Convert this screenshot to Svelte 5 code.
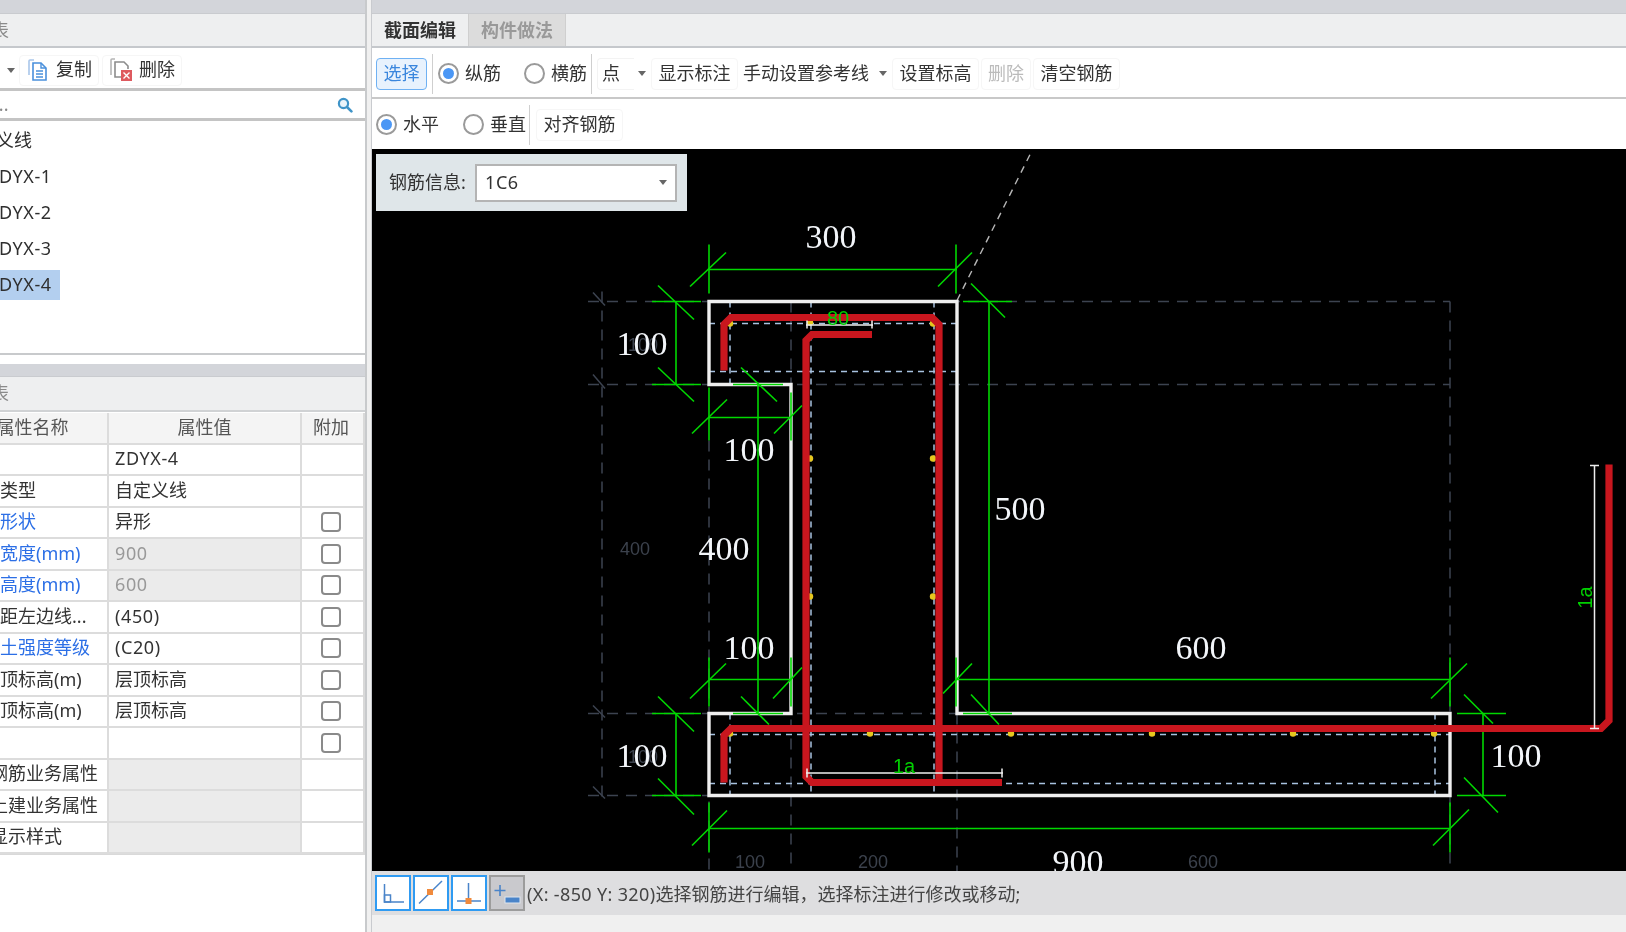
<script>
  const treeRows = [
    { label: '自定义线', root: true },
    { label: 'ZDYX-1' },
    { label: 'ZDYX-2' },
    { label: 'ZDYX-3' },
    { label: 'ZDYX-4', selected: true }
  ];

  const props = [
    { name: '名称', value: 'ZDYX-4', latin: true },
    { name: '截面类型', value: '自定义线' },
    { name: '截面形状', value: '异形', link: true, check: true },
    { name: '截面宽度(mm)', value: '900', link: true, check: true, off: true, latin: true },
    { name: '截面高度(mm)', value: '600', link: true, check: true, off: true, latin: true },
    { name: '轴线距左边线...', value: '(450)', check: true, latin: true },
    { name: '混凝土强度等级', value: '(C20)', link: true, check: true, latin: true },
    { name: '起点顶标高(m)', value: '层顶标高', check: true },
    { name: '终点顶标高(m)', value: '层顶标高', check: true },
    { name: '备注', value: '', check: true },
    { name: '钢筋业务属性', value: '', group: true },
    { name: '土建业务属性', value: '', group: true },
    { name: '显示样式', value: '', group: true }
  ];

  // Drawing coordinates are in page pixels; the SVG's viewBox starts at the canvas corner.
  const green = [
    // 300
    [709,269,957,269],[709,244,709,293],[956,244,956,293],[690,286,726,252],[938,286,972,252],
    // 100 upper left
    [676,301,676,384],[652,301,701,301],[652,384,701,384],[658,285,694,319],[658,367,694,401],
    // 100 under the notch
    [709,417,791,417],[709,387,709,440],[791,392,791,440],[692,433,727,399],[774,433,802,405],
    // 400
    [758,384,758,713],[733,384,783,384],[733,713,783,713],[741,367,777,401],[741,696,769,724],
    // 100 lower
    [709,679,791,679],[709,657,709,706],[791,657,791,706],[690,698,726,663],[773,698,802,667],
    // 500
    [989,301,989,713],[963,301,1012,301],[963,713,1012,713],[971,283,1005,317],[971,694,999,724],
    // 600
    [957,679,1450,679],[956,657,956,706],[1450,657,1450,706],[943,693,972,663],[1431,698,1467,663],
    // 100 lower left
    [676,713,676,795],[652,713,701,713],[652,795,701,795],[658,696,694,731],[658,778,694,814],
    // 100 right
    [1483,713,1483,795],[1457,713,1506,713],[1457,795,1506,795],[1464,694,1493,723],[1464,777,1498,812],
    // 900
    [709,828,1450,828],[709,802,709,852],[1450,802,1450,852],[692,845,727,810],[1433,845,1469,809]
  ];

  const grid = [
    [588,301,1450,301],[588,384,1450,384],[588,713,1450,713],[588,795,709,795],
    [602,291,602,800],[709,440,709,871],[791,301,791,871],[957,713,957,871],[1450,301,1450,871]
  ];
  const gridTicks = [
    [593,292,605,305],[593,374,605,388],[593,705,605,717],[593,786,605,798]
  ];
  const inner = [
    [709,323,957,323],[709,371,957,371],[730,301,730,384],[811,301,811,795],[934,301,934,795],
    [709,734,1450,734],[709,783,1450,783],[1435,713,1435,795],[730,713,730,795]
  ];
  const dots = [
    [730,323],[810,322],[933,323],[810,458],[933,458],[810,596],[933,596],
    [730,733],[870,733],[1011,733],[1152,733],[1293,733],[1434,733]
  ];
  const bigLabels = [
    ['300',831,247],['100',642,354],['100',749,460],['400',724,559],['500',1020,519],
    ['100',749,658],['600',1201,658],['100',642,766],['100',1516,766],['900',1078,872]
  ];
  const faintLabels = [
    ['100',643,350],['400',635,554],['100',643,762],['100',750,867],['200',873,867],['600',1203,867]
  ];
</script>

<div class="app">
  <div class="left">
    <div class="bar"></div>
    <div class="head"><span class="head-text">构件列表</span></div>
    <div class="tools">
      <span class="arrow lead"></span>
      <button class="tool copy">
        <svg width="20" height="22" viewBox="0 0 20 22">
          <path d="M6 1H2a1 1 0 0 0-1 1v14" fill="none" stroke="#a9c6ea" stroke-width="1.6"/>
          <path d="M5 4h8l5 5v12H5z" fill="#fff" stroke="#4a90dc" stroke-width="1.6"/>
          <path d="M13 4v5h5M8 12h7M8 15h7M8 18h7" fill="none" stroke="#4a90dc" stroke-width="1.4"/>
        </svg>
        <span>复制</span>
      </button>
      <button class="tool del">
        <svg width="22" height="24" viewBox="0 0 22 24">
          <path d="M5 1H2a1 1 0 0 0-1 1v15" fill="none" stroke="#b5b5b5" stroke-width="1.6"/>
          <path d="M11 19H5V4h9l4 4v3" fill="#fff" stroke="#8c8c8c" stroke-width="1.6"/>
          <rect x="11" y="12" width="11" height="11" fill="#de5a5f"/>
          <path d="M13.500 14.500l6 6M19.500 14.500l-6 6" stroke="#fff" stroke-width="1.4"/>
        </svg>
        <span>删除</span>
      </button>
    </div>
    <div class="search">
      <span class="placeholder">请输入名称...</span>
      <svg width="16" height="16" viewBox="0 0 16 16">
        <circle cx="6.500" cy="6.500" r="4.600" fill="#eaf4fa" stroke="#3f94c8" stroke-width="2.200"/>
        <path d="M10 10l4.400 4.400" stroke="#3f94c8" stroke-width="2.600" stroke-linecap="round"/>
      </svg>
    </div>
    <div class="tree">
      {#each treeRows as row}
        <div class="tree-row" class:root={row.root}>
          <span class:selected={row.selected}>{row.label}</span>
        </div>
      {/each}
    </div>
    <div class="bar lower"></div>
    <div class="head lower-head"><span class="head-text">属性列表</span></div>
    <div class="table-wrap">
      <div class="grid">
        <div class="cell hd col1">属性名称</div>
        <div class="cell hd mid">属性值</div>
        <div class="cell hd last">附加</div>
        {#each props as p}
          <div class="cell col1" class:link={p.link} class:group={p.group}>{p.name}</div>
          <div class="cell mid" class:off={p.off || p.group} class:latin={p.latin}>{p.value}</div>
          <div class="cell last">{#if p.check}<span class="box"></span>{/if}</div>
        {/each}
      </div>
    </div>
  </div>

  <div class="gutter"></div>

  <div class="right">
    <div class="bar"></div>
    <div class="tabs">
      <div class="tab active">截面编辑</div>
      <div class="tab">构件做法</div>
    </div>
    <div class="row row1">
      <button class="btn primary">选择</button>
      <span class="sep s1"></span>
      <span class="radio on r1"></span><span class="lbl">纵筋</span>
      <span class="radio r2"></span><span class="lbl">横筋</span>
      <span class="sep s2"></span>
      <span class="combo">点</span>
      <span class="arrow a1"></span>
      <button class="btn b1">显示标注</button>
      <span class="lbl l1">手动设置参考线</span>
      <span class="arrow a2"></span>
      <button class="btn b2">设置标高</button>
      <button class="btn dim">删除</button>
      <button class="btn b3">清空钢筋</button>
    </div>
    <div class="row row2">
      <span class="radio on r3"></span><span class="lbl">水平</span>
      <span class="radio r4"></span><span class="lbl">垂直</span>
      <span class="sep s3"></span>
      <button class="btn b4">对齐钢筋</button>
    </div>
    <div class="canvas">
      <svg class="drawing" width="1253" height="722" viewBox="372 148.500 1253 722">
        <rect x="372" y="148" width="1253" height="723" fill="#000"/>
        <line x1="957" y1="300" x2="1031" y2="152" stroke="#b8b8b8" stroke-width="1.4" stroke-dasharray="7 6"/>
        {#each grid as [x1, y1, x2, y2]}
          <line {x1} {y1} {x2} {y2} stroke="#3c4350" stroke-width="1.5" stroke-dasharray="11 8"/>
        {/each}
        {#each gridTicks as [x1, y1, x2, y2]}
          <line {x1} {y1} {x2} {y2} stroke="#3c4350" stroke-width="1.5"/>
        {/each}
        {#each faintLabels as [t, x, y]}
          <text class="faint" {x} {y}>{t}</text>
        {/each}
        {#each inner as [x1, y1, x2, y2]}
          <line {x1} {y1} {x2} {y2} stroke="#a8c2e0" stroke-width="1.5" stroke-dasharray="6 5"/>
        {/each}
        <path d="M709 301H957V713H1450V795H709V713H791V384H709Z" fill="none" stroke="#efefef" stroke-width="3.400"/>
        {#each dots as [cx, cy]}
          <circle {cx} {cy} r="3.200" fill="#e6c71e"/>
        {/each}
        {#each green as [x1, y1, x2, y2]}
          <line {x1} {y1} {x2} {y2} stroke="#00d800" stroke-width="1.600"/>
        {/each}
        <g fill="none" stroke="#c8161e" stroke-width="7.200">
          <path d="M724 370V324L731 317H932L939 324V782"/>
          <path d="M872 334H812L806 340V776L812 782H1002"/>
          <path d="M724 782V735L731 728H1601L1609 720V464"/>
        </g>
        <g fill="none" stroke="#eee" stroke-width="1.500">
          <path d="M806 324.500H873M807 320v8M872 320v8"/>
          <path d="M806 772.500H1003M807 768v9M1002 768v9"/>
          <path d="M1594.500 465V728M1590 465h9M1590 728h9"/>
        </g>
        {#each bigLabels as [t, x, y]}
          <text class="big" {x} {y}>{t}</text>
        {/each}
        <text class="note" x="838" y="324">80</text>
        <text class="note" x="904" y="772">1a</text>
        <text class="note" transform="translate(1592 597) rotate(-90)">1a</text>
      </svg>
      <div class="info">
        <span class="info-label">钢筋信息:</span>
        <div class="select"><span class="latin">1C6</span><span class="arrow a3"></span></div>
      </div>
    </div>
    <div class="status">
      <span class="sbtn">
        <svg width="32" height="32" viewBox="0 0 32 32" fill="none" stroke="#4a84c9" stroke-width="1.500">
          <path d="M7.500 7V25H27"/><rect x="7.500" y="18" width="6" height="7"/>
        </svg>
      </span>
      <span class="sbtn">
        <svg width="32" height="32" viewBox="0 0 32 32" fill="none">
          <path d="M4 26.500L27 4" stroke="#4a84c9" stroke-width="1.500"/>
          <rect x="12" y="12" width="6" height="6" fill="#f08a3c"/>
        </svg>
      </span>
      <span class="sbtn">
        <svg width="32" height="32" viewBox="0 0 32 32" fill="none">
          <path d="M15.500 6V24M4 24H28" stroke="#4a84c9" stroke-width="1.500"/>
          <rect x="12.500" y="21" width="6" height="6" fill="#f08a3c"/>
        </svg>
      </span>
      <span class="sbtn gray">
        <svg width="32" height="32" viewBox="0 0 32 32" fill="none">
          <path d="M9 8V19M3.500 13.500H14.500" stroke="#4a84c9" stroke-width="1.600"/>
          <rect x="14" y="20" width="15" height="6" fill="#4a84c9" stroke="#dfe6ee" stroke-width="1"/>
        </svg>
      </span>
      <span class="status-text"><span class="coords">(X: -850 Y: 320)</span>选择钢筋进行编辑，选择标注进行修改或移动;</span>
    </div>
  </div>
</div>

<style>
  :global(body) {
    margin: 0;
    background: #f0f0f0;
  }
  .app {
    display: flex;
    width: 1626px;
    height: 932px;
    overflow: hidden;
    background: #f0f0f0;
    color: #333;
    font: 18px/1.2 "Noto Sans", "Noto Sans CJK SC", sans-serif;
    filter: blur(0.55px);
  }
  button {
    font: inherit;
    color: inherit;
    padding: 0;
    background: #fff;
    border: 1px solid #f6f6f6;
    border-radius: 4px;
  }
  .latin { letter-spacing: 0.6px; }
  .coords { letter-spacing: 0.35px; }

  /* left column */
  .left {
    width: 365px;
    height: 932px;
    flex: none;
    overflow: hidden;
    background: #fff;
    border-right: 2px solid #c8cacc;
    display: flex;
    flex-direction: column;
  }
  .bar {
    height: 13px;
    flex: none;
    background: #d3d5da;
    border-bottom: 1px solid #c9cbcf;
  }
  .head {
    height: 31px;
    padding-top: 1px;
    flex: none;
    background: #eeeff0;
    border-bottom: 2px solid #c5c8cc;
    display: flex;
    align-items: center;
  }
  .head-text {
    margin-left: -63px;
    color: #8a8a8a;
  }
  .tools {
    height: 36px;
    padding-top: 4px;
    flex: none;
    display: flex;
    align-items: center;
    border-bottom: 3px solid #c4c4c4;
  }
  .tool {
    height: 31px;
    display: flex;
    align-items: center;
    flex: none;
  }
  .tool span { display: block; }
  .copy {
    width: 80px;
    margin-left: 4px;
    padding-left: 8px;
    gap: 8px;
  }
  .del {
    width: 80px;
    margin-left: 3px;
    padding-left: 7px;
    gap: 7px;
  }
  .arrow {
    width: 0;
    height: 0;
    flex: none;
    border: 4px solid transparent;
    border-top: 5px solid #666;
    border-bottom: 0;
  }
  .lead { margin-left: 7px; }
  .search {
    height: 27px;
    flex: none;
    display: flex;
    align-items: center;
    justify-content: space-between;
    padding: 0 12px 0 0;
    border-bottom: 3px solid #c4c4c4;
  }
  .placeholder {
    margin-left: -96px;
    color: #888;
    font-size: 18px;
  }
  .tree {
    height: 234px;
    padding-top: 2px;
    flex: none;
    box-sizing: border-box;
    border-bottom: 2px solid #c8cacc;
  }
  .tree-row {
    height: 36px;
    display: flex;
    align-items: center;
    margin-left: -12px;
    box-sizing: border-box;
    color: #2f2f2f;
    letter-spacing: 0.6px;
  }
  .tree-row.root {
    margin-left: -40px;
    letter-spacing: 0;
  }
  .tree-row span {
    padding: 4px 8px 4px 0;
  }
  .tree-row .selected {
    background: #b3cfef;
  }
  .lower {
    margin-top: 9px;
    height: 12px;
  }
  .lower-head {
    height: 32px;
    background: #eeeff0;
    border-bottom: 2px solid #d0d2d4;
  }
  .table-wrap {
    margin-left: -42px;
    padding-top: 1px;
  }
  .grid {
    display: grid;
    grid-template-columns: 151px 193px 61px;
    grid-auto-rows: 31.5px;
    width: 405px;
    background: #fff;
    border-right: 2px solid #d9d9d9;
    border-bottom: 1px solid #d9d9d9;
  }
  .cell {
    box-sizing: border-box;
    display: flex;
    align-items: center;
    white-space: nowrap;
    overflow: hidden;
    border-right: 2px solid #dcdcdc;
    border-bottom: 2px solid #dcdcdc;
    padding-left: 6px;
  }
  .cell.last {
    border-right: 0;
    justify-content: center;
    padding: 0 3px 0 0;
  }
  .cell.hd {
    justify-content: center;
    padding-left: 0;
    background: #f4f4f4;
    color: #555;
  }
  .cell.link { color: #2c6fe6; }
  .cell.group { padding-left: 32px; }
  .cell.off {
    background: #ebebeb;
    color: #999;
  }
  .box {
    width: 20px;
    height: 20px;
    box-sizing: border-box;
    border: 2px solid #8a8a8a;
    border-radius: 4px;
    background: #fff;
  }

  .gutter {
    width: 4px;
    box-sizing: border-box;
    flex: none;
    margin-left: 1px;
    border-right: 1px solid #c9cbcf;
    background: #f0f0f0;
  }

  /* right column */
  .right {
    flex: 1;
    min-width: 0;
    display: flex;
    flex-direction: column;
  }
  .tabs {
    height: 32px;
    flex: none;
    display: flex;
    background: #eeeff0;
    border-bottom: 2px solid #c5c8cc;
  }
  .tab {
    width: 97px;
    padding-top: 1px;
    display: flex;
    align-items: center;
    justify-content: center;
    background: #dcdcdc;
    color: #999;
    font-weight: 700;
    border-right: 1px solid #cfcfcf;
    box-sizing: border-box;
  }
  .tab.active {
    background: #eeeff0;
    color: #333;
  }
  .row {
    flex: none;
    display: flex;
    align-items: center;
    background: #fff;
    box-sizing: border-box;
    white-space: nowrap;
  }
  .row1 {
    height: 51px;
    padding-top: 2px;
    border-bottom: 2px solid #c8c8c8;
  }
  .row2 {
    height: 50px;
    padding-top: 1px;
  }
  .btn {
    height: 32px;
    width: 87px;
    flex: none;
  }
  .primary {
    width: 51px;
    margin-left: 4px;
    background: #e8f2fd;
    border-color: #6fb1f3;
    color: #3a86dd;
  }
  .sep {
    width: 1px;
    height: 40px;
    flex: none;
    background: #cfcfcf;
  }
  .s1 { margin-left: 5px; }
  .s2 { margin-left: 4px; }
  .s3 { margin-left: 3px; }
  .radio {
    width: 21px;
    height: 21px;
    box-sizing: border-box;
    flex: none;
    border: 2px solid #9a9a9a;
    border-radius: 50%;
    background: #fff;
    margin-right: 6px;
    position: relative;
  }
  .radio.on::after {
    content: "";
    position: absolute;
    inset: 3px;
    border-radius: 50%;
    background: #4b97f5;
  }
  .r1 { margin-left: 5px; }
  .r2 { margin-left: 23px; }
  .r3 { margin-left: 4px; }
  .r4 { margin-left: 24px; }
  .lbl { flex: none; }
  .combo {
    width: 37px;
    height: 32px;
    flex: none;
    margin-left: 5px;
    padding-left: 4px;
    box-sizing: border-box;
    display: flex;
    align-items: center;
    border: 1px solid #f3f3f3;
    border-right: 0;
    border-radius: 4px 0 0 4px;
  }
  .a1 { margin-left: 4px; }
  .b1 { margin-left: 5px; }
  .l1 { margin-left: 5px; }
  .a2 { margin-left: 10px; }
  .b2 { margin-left: 5px; }
  .dim {
    width: 50px;
    margin-left: 2px;
    color: #bbb;
  }
  .b3 { margin-left: 2px; }
  .b4 { margin-left: 6px; }

  .canvas {
    height: 722px;
    flex: none;
    position: relative;
    background: #000;
    overflow: hidden;
  }
  .drawing { display: block; }
  .big {
    font: 34px "Liberation Serif", serif;
    fill: #f3f6fa;
    text-anchor: middle;
  }
  .faint {
    font: 18px "Liberation Sans", sans-serif;
    fill: #3b414c;
    text-anchor: middle;
  }
  .note {
    font: 20px "Liberation Sans", sans-serif;
    fill: #00d000;
    text-anchor: middle;
  }
  .info {
    position: absolute;
    left: 4px;
    top: 5px;
    width: 311px;
    height: 57px;
    background: #dfe6e9;
    display: flex;
    align-items: center;
    padding-left: 13px;
    box-sizing: border-box;
  }
  .info-label {
    width: 86px;
    flex: none;
  }
  .select {
    width: 202px;
    height: 38px;
    box-sizing: border-box;
    border: 2px solid #b4b4b4;
    background: #fff;
    display: flex;
    align-items: center;
    justify-content: space-between;
    padding: 0 8px 0 8px;
  }

  .status {
    height: 44px;
    flex: none;
    background: #dedee0;
    display: flex;
    align-items: center;
    gap: 2px;
    padding-left: 3px;
  }
  .sbtn {
    width: 36px;
    height: 36px;
    box-sizing: border-box;
    flex: none;
    background: #fff;
    border: 2px solid #2f9bf2;
    display: flex;
    align-items: center;
    justify-content: center;
  }
  .sbtn.gray {
    background: #c9c9cd;
    border-color: #9c9c9c;
  }
  .status-text {
    padding-top: 3px;
    white-space: nowrap;
    color: #444;
  }
</style>
